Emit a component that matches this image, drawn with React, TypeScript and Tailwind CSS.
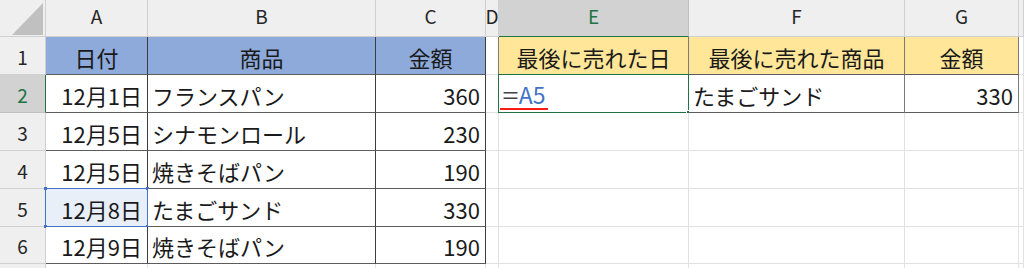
import React from 'react';

const FONT = "font-['Noto_Sans_CJK_JP','Noto_Sans',sans-serif]";

const COLS = ['A', 'B', 'C', 'D', 'E', 'F', 'G', ''];
const ROW_H = ['h-[38px]', 'h-[38px]', 'h-[38px]', 'h-[38px]', 'h-[38px]', 'h-[37px]'];

type Cell = {
  text?: string;
  align?: 'left' | 'right' | 'center';
  bg?: string;
  br?: string;
  bb?: string;
};

const BLUE_HEAD = { align: 'center' as const, bg: 'bg-[#8eaadb]', br: 'border-r-[#3d3d3d]', bb: 'border-b-[#5c5c5c]' };
const YELLOW_HEAD = { align: 'center' as const, bg: 'bg-[#ffe699]', br: 'border-r-[#7a7a7a]', bb: 'border-b-[#5c5c5c]' };
const LEFT_TBL = { br: 'border-r-[#3d3d3d]', bb: 'border-b-[#5c5c5c]' };
const RIGHT_TBL = { br: 'border-r-[#7a7a7a]', bb: 'border-b-[#5c5c5c]' };
const EMPTY: Cell = {};

const DATA: Cell[][] = [
  [
    { text: '日付', ...BLUE_HEAD },
    { text: '商品', ...BLUE_HEAD },
    { text: '金額', ...BLUE_HEAD },
    { br: 'border-r-[#7a7a7a]' },
    { text: '最後に売れた日', ...YELLOW_HEAD },
    { text: '最後に売れた商品', ...YELLOW_HEAD },
    { text: '金額', ...YELLOW_HEAD },
    EMPTY,
  ],
  [
    { text: '12月1日', align: 'right', ...LEFT_TBL },
    { text: 'フランスパン', align: 'left', ...LEFT_TBL },
    { text: '360', align: 'right', ...LEFT_TBL },
    { br: 'border-r-[#7a7a7a]' },
    { text: 'formula', align: 'left', ...RIGHT_TBL },
    { text: 'たまごサンド', align: 'left', ...RIGHT_TBL },
    { text: '330', align: 'right', ...RIGHT_TBL },
    EMPTY,
  ],
  [
    { text: '12月5日', align: 'right', ...LEFT_TBL },
    { text: 'シナモンロール', align: 'left', ...LEFT_TBL },
    { text: '230', align: 'right', ...LEFT_TBL },
    EMPTY, EMPTY, EMPTY, EMPTY, EMPTY,
  ],
  [
    { text: '12月5日', align: 'right', ...LEFT_TBL },
    { text: '焼きそばパン', align: 'left', ...LEFT_TBL },
    { text: '190', align: 'right', ...LEFT_TBL },
    EMPTY, EMPTY, EMPTY, EMPTY, EMPTY,
  ],
  [
    { text: '12月8日', align: 'right', ...LEFT_TBL, bg: 'bg-[#e9eff8]' },
    { text: 'たまごサンド', align: 'left', ...LEFT_TBL },
    { text: '330', align: 'right', ...LEFT_TBL },
    EMPTY, EMPTY, EMPTY, EMPTY, EMPTY,
  ],
  [
    { text: '12月9日', align: 'right', ...LEFT_TBL },
    { text: '焼きそばパン', align: 'left', ...LEFT_TBL },
    { text: '190', align: 'right', ...LEFT_TBL },
    EMPTY, EMPTY, EMPTY, EMPTY, EMPTY,
  ],
];

function CellText({ text }: { text?: string }) {
  if (text === 'formula') {
    return (
      <span className="flex flex-col gap-[2px] -ml-[3px] pt-[3px]">
        <span className="flex items-baseline text-[23px] leading-none gap-[1px] pl-[4px]">
          <span className="text-[#444] scale-x-125">=</span>
          <span className="text-[#4472c4] pl-[1px]">A5</span>
        </span>
        <span className="h-[2px] w-[48px] bg-[#ff1a1a]" />
      </span>
    );
  }
  return <>{text}</>;
}

function DataCell({ cell, row, col }: { cell: Cell; row: number; col: number }) {
  const align =
    cell.align === 'right'
      ? 'justify-end pr-[5px]'
      : cell.align === 'center'
        ? 'justify-center'
        : 'justify-start pl-[4px]';
  const isActive = row === 1 && col === 4;
  const isRef = row === 4 && col === 0;
  return (
    <div
      className={`relative flex items-center pt-[2px] border-r border-b text-[22px] leading-none text-[#1a1a1a] whitespace-nowrap ${align} ${
        cell.bg ?? 'bg-white'
      } ${cell.br ?? 'border-r-[#e1e1e1]'} ${cell.bb ?? 'border-b-[#e1e1e1]'}`}
    >
      <CellText text={cell.text} />
      {isActive && (
        <>
          <div className="absolute -left-[1px] -top-[1px] right-[-1px] bottom-[-1px] border border-[#217346]" />
          <div className="absolute right-[-3px] bottom-[-3px] w-[5px] h-[5px] bg-[#217346] border border-white" />
        </>
      )}
      {isRef && (
        <>
          <div className="absolute -left-[1px] -top-[1px] right-[-1px] bottom-[-1px] border border-[#4472c4]" />
          <div className="absolute -left-[2px] -top-[2px] w-[3px] h-[3px] bg-[#4472c4]" />
          <div className="absolute right-[-2px] -top-[2px] w-[3px] h-[3px] bg-[#4472c4]" />
          <div className="absolute -left-[2px] bottom-[-2px] w-[3px] h-[3px] bg-[#4472c4]" />
          <div className="absolute right-[-2px] bottom-[-2px] w-[3px] h-[3px] bg-[#4472c4]" />
        </>
      )}
    </div>
  );
}

export default function App() {
  return (
    <div className={`w-[1024px] h-[268px] overflow-hidden bg-white ${FONT}`}>
      <div className="grid grid-cols-[46px_102px_228px_110px_13px_190px_216px_114px_5px]">
        {/* Column headers */}
        <div className="h-[37px] bg-[#efefef] border-r border-b border-[#d0d0d0]">
          <svg width="45" height="36" viewBox="0 0 45 36">
            <polygon points="12,35 43,3 43,35" fill="#c0c0c0" />
          </svg>
        </div>
        {COLS.map((c) => (
          <div
            key={c || 'H'}
            className={`h-[37px] flex justify-center pt-[3px] text-[19px] leading-[26px] border-r border-b ${
              c === 'E'
                ? 'bg-[#d2d2d2] text-[#217346] border-r-[#c0c0c0] border-b-[#217346]'
                : 'bg-[#efefef] text-[#262626] border-[#d0d0d0]'
            }`}
          >
            {c}
          </div>
        ))}

        {/* Rows */}
        {DATA.map((row, r) => (
          <React.Fragment key={r}>
            <div
              className={`${ROW_H[r]} flex items-center justify-center pt-[1px] text-[19px] leading-none border-r border-b ${
                r === 1
                  ? 'bg-[#d2d2d2] text-[#217346] border-r-[#217346] border-b-[#c0c0c0]'
                  : 'bg-[#efefef] text-[#262626] border-[#d0d0d0]'
              }`}
            >
              {r + 1}
            </div>
            {row.map((cell, c) => (
              <DataCell key={c} cell={cell} row={r} col={c} />
            ))}
          </React.Fragment>
        ))}

        {/* Row 7 sliver */}
        <div className="h-[10px] bg-[#efefef] border-r border-[#d0d0d0]" />
        {COLS.map((c) => (
          <div key={'r7' + c} className="h-[10px] bg-white border-r border-[#e1e1e1]" />
        ))}
      </div>
    </div>
  );
}
